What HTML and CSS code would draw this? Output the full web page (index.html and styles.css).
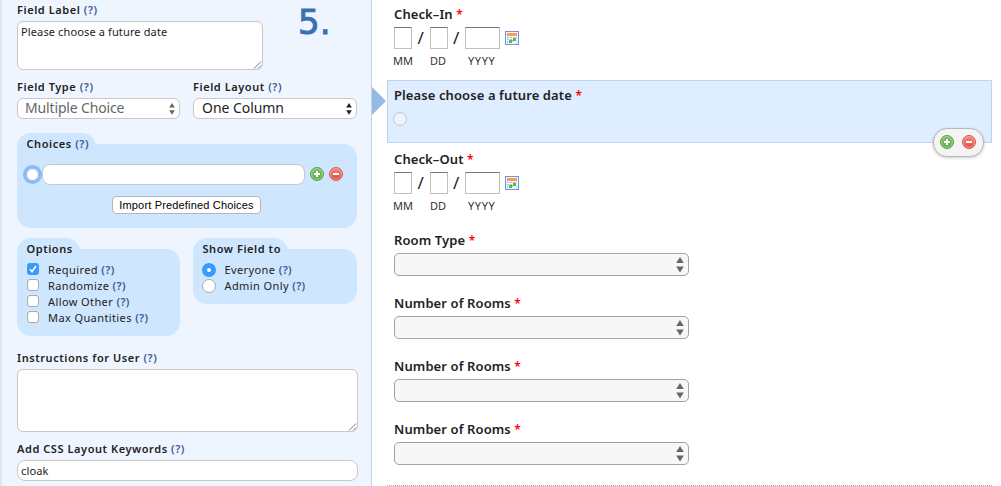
FILE: index.html
```html
<!DOCTYPE html>
<html lang="en">
<head>
<meta charset="utf-8">
<title>Form Builder</title>
<link rel="stylesheet" href="styles.css">
</head>
<body>
<svg class="defs" aria-hidden="true">
  <defs>
    <linearGradient id="green" x2="0" y2="1"><stop stop-color="#7cc468"/><stop offset="1" stop-color="#5bab4a"/></linearGradient>
    <linearGradient id="red" x2="0" y2="1"><stop stop-color="#f28a7b"/><stop offset="1" stop-color="#e2493c"/></linearGradient>
  </defs>
  <symbol id="add" viewBox="0 0 14 14">
    <circle cx="7" cy="7" r="6.5" fill="url(#green)" stroke="#5aa04f"/>
    <circle cx="7" cy="7" r="5.4" fill="none" stroke="#b4dda8" stroke-width=".7"/>
    <path d="M7 4v6M4 7h6" stroke="#fff" stroke-width="2"/>
  </symbol>
  <symbol id="remove" viewBox="0 0 14 14">
    <circle cx="7" cy="7" r="6.5" fill="url(#red)" stroke="#d65c50"/>
    <circle cx="7" cy="7" r="5.4" fill="none" stroke="#f8b5aa" stroke-width=".7"/>
    <path d="M4 7h6" stroke="#fff" stroke-width="2"/>
  </symbol>
  <symbol id="calendar" viewBox="0 0 14 14">
    <rect x=".5" y=".5" width="13" height="13" fill="#f4f8fd" stroke="#6c98d4"/>
    <rect x="2" y="2" width="10" height="3" fill="#fb9a57"/>
    <path d="M2 6h2v1H2zM5 6h2v1H5zM8 6h2v1H8zM11 6h1v1h-1zM2 8h2v1H2zM5 8h2v1H5zM2 10h1v2H2z" fill="#a3bfe4"/>
    <path d="M8 7h3v3H8zM4 9h3v3H4z" fill="#5fb355"/>
    <path d="M7 9h1v2H7z" fill="#a5d39c"/>
    <path d="M12.500 9.500v3h-3z" fill="#cddcf0"/>
  </symbol>
  <symbol id="updown" viewBox="0 0 8 16">
    <path d="M4 0l3.800 6H.2zM4 15.500L.2 9.500h7.600z" fill="currentColor"/>
  </symbol>
  <symbol id="grip" viewBox="0 0 9 9">
    <path d="M1 8.500L8 1.500M5 8.500L8 5.500" stroke="#555" fill="none" stroke-width=".8"/>
  </symbol>
</svg>
<div class="page">
  <aside class="panel">
    <div class="row top">
      <div class="field-label">
        <div class="label">Field Label <b class="help">(?)</b></div>
        <div class="box area-small">Please choose a future date<svg class="grip"><use href="#grip"/></svg></div>
      </div>
      <div class="step">5.</div>
    </div>
    <div class="row types">
      <div class="col-left">
        <div class="label">Field Type <b class="help">(?)</b></div>
        <div class="box select muted"><span>Multiple Choice</span><svg class="arrows"><use href="#updown"/></svg></div>
      </div>
      <div class="col-right">
        <div class="label">Field Layout <b class="help">(?)</b></div>
        <div class="box select layout"><span>One Column</span><svg class="arrows"><use href="#updown"/></svg></div>
      </div>
    </div>
    <section class="group choices">
      <div class="tab">Choices <b class="help">(?)</b></div>
      <div class="group-body">
        <div class="choice">
          <span class="focus-radio"></span>
          <div class="box choice-input"></div>
          <svg class="icon"><use href="#add"/></svg>
          <svg class="icon"><use href="#remove"/></svg>
        </div>
        <div class="button">Import Predefined Choices</div>
      </div>
    </section>
    <div class="row groups">
      <section class="group col-left">
        <div class="tab">Options</div>
        <div class="group-body options">
          <div class="option"><svg class="check on" viewBox="0 0 12 12"><path d="M3 6.300l2 2.400L9 3" fill="none" stroke="#fff" stroke-width="1.500"/></svg><span>Required <b class="help">(?)</b></span></div>
          <div class="option"><i class="check"></i><span>Randomize <b class="help">(?)</b></span></div>
          <div class="option"><i class="check"></i><span>Allow Other <b class="help">(?)</b></span></div>
          <div class="option"><i class="check"></i><span>Max Quantities <b class="help">(?)</b></span></div>
        </div>
      </section>
      <section class="group col-right">
        <div class="tab">Show Field to</div>
        <div class="group-body show">
          <div class="option"><i class="radio on"></i><span>Everyone <b class="help">(?)</b></span></div>
          <div class="option"><i class="radio"></i><span>Admin Only <b class="help">(?)</b></span></div>
        </div>
      </section>
    </div>
    <div class="instructions">
      <div class="label">Instructions for User <b class="help">(?)</b></div>
      <div class="box area-large"><svg class="grip"><use href="#grip"/></svg></div>
    </div>
    <div class="keywords">
      <div class="label">Add CSS Layout Keywords <b class="help">(?)</b></div>
      <div class="box text-input">cloak</div>
    </div>
  </aside>
  <main class="preview">
    <svg class="pointer" viewBox="0 0 14 28"><path d="M0 0l14 14L0 28z" fill="#95bae3"/></svg>
    <div class="item date">
      <div class="title">Check–In <b class="req">*</b></div>
      <div class="date-row"><i class="cell"></i><span class="slash">/</span><i class="cell"></i><span class="slash">/</span><i class="cell year"></i><svg class="icon cal"><use href="#calendar"/></svg></div>
      <div class="captions"><span>MM</span><span>DD</span><span>YYYY</span></div>
    </div>
    <div class="item selected">
      <div class="title">Please choose a future date <b class="req">*</b></div>
      <i class="radio disabled"></i>
      <div class="actions"><svg class="icon"><use href="#add"/></svg><svg class="icon"><use href="#remove"/></svg></div>
    </div>
    <div class="item date">
      <div class="title">Check–Out <b class="req">*</b></div>
      <div class="date-row"><i class="cell"></i><span class="slash">/</span><i class="cell"></i><span class="slash">/</span><i class="cell year"></i><svg class="icon cal"><use href="#calendar"/></svg></div>
      <div class="captions"><span>MM</span><span>DD</span><span>YYYY</span></div>
    </div>
    <div class="item drop"><div class="title">Room Type <b class="req">*</b></div><div class="dropdown"><svg class="arrows"><use href="#updown"/></svg></div></div>
    <div class="item drop"><div class="title">Number of Rooms <b class="req">*</b></div><div class="dropdown"><svg class="arrows"><use href="#updown"/></svg></div></div>
    <div class="item drop"><div class="title">Number of Rooms <b class="req">*</b></div><div class="dropdown"><svg class="arrows"><use href="#updown"/></svg></div></div>
    <div class="item drop"><div class="title">Number of Rooms <b class="req">*</b></div><div class="dropdown"><svg class="arrows"><use href="#updown"/></svg></div></div>
    <div class="divider"></div>
  </main>
</div>
</body>
</html>
```
FILE: styles.css
```css
* { box-sizing: border-box; }
body {
  margin: 0;
  background: #fff;
  color: #222;
  font-family: "Noto Sans", "Open Sans", sans-serif;
  font-size: 11px;
  overflow: hidden;
}
svg { display: block; flex: none; }
.defs { position: absolute; width: 0; height: 0; }
.page { display: flex; height: 486px; }
.panel {
  width: 372px;
  flex: none;
  padding: 2px 0 0 15px;
  background: #eef5ff;
  border-left: 2px solid #e3e6ea;
  border-right: 1px solid #bdd3ef;
}
.row { display: flex; }
.label {
  height: 16px;
  line-height: 16px;
  margin-bottom: 3px;
  font-weight: 600;
  letter-spacing: .56px;
  white-space: nowrap;
}
.help { color: #3b5998; font-weight: 600; }
.box {
  background: #fff;
  border: 1px solid #c8c8c8;
  border-radius: 6px;
}
.top { height: 77px; }
.field-label { width: 246px; }
.area-small {
  position: relative;
  height: 49px;
  padding: 2px 3px;
  line-height: 15px;
  letter-spacing: .13px;
}
.grip { position: absolute; right: 0; bottom: 0; width: 9px; height: 9px; }
.step {
  margin-left: 35px;
  height: 40px;
  line-height: 40px;
  font-family: "DejaVu Sans", sans-serif;
  font-size: 34px;
  color: #3a70b2;
  -webkit-text-stroke: 1px #3a70b2;
}
.types { height: 54px; }
.col-left { width: 163px; margin-right: 13px; }
.col-right { width: 164px; }
.select {
  display: flex;
  align-items: center;
  justify-content: space-between;
  height: 21px;
  padding: 0 4px 0 7px;
  font-size: 14px;
  line-height: 17px;
  letter-spacing: -.15px;
}
.select span { height: 19px; }
.layout { padding-left: 8px; letter-spacing: -.05px; }
.select .arrows { width: 6px; height: 12px; }
.muted { color: #666; }
.tab {
  width: max-content;
  height: 22px;
  margin-bottom: -11px;
  padding: 0 7px 0 9.5px;
  line-height: 22px;
  font-weight: 600;
  letter-spacing: .56px;
  background: #cfe6ff;
  border-radius: 14px 14px 0 0;
}
.group-body { background: #cfe6ff; border-radius: 14px; }
.choices { width: 340px; height: 105px; }
.choices .group-body { height: 84px; padding: 20px 0 0 6px; border-top-left-radius: 0; }
.groups .group-body { border-top-left-radius: 0; }
.choice { display: flex; align-items: center; height: 21px; }
.focus-radio {
  width: 19px;
  height: 19px;
  background: #fff;
  border: 3px solid #86bafb;
  box-shadow: inset 0 0 0 1px #8fb2de;
  border-radius: 50%;
}
.choice-input { width: 263px; height: 21px; margin-right: 5px; border-radius: 8px; }
.icon { width: 14px; height: 14px; }
.choice .icon { margin-top: -1px; }
.choice .icon + .icon { margin-left: 5px; }
.button {
  width: 149px;
  height: 18px;
  margin: 11px 0 0 89px;
  border: 1px solid #b5b5b5;
  border-radius: 4px;
  background: #fff;
  color: #000;
  text-align: center;
  font: 11px/16px "Liberation Sans", Arial, sans-serif;
  letter-spacing: .17px;
}
.groups { height: 112px; align-items: flex-start; }
.options { height: 87px; padding: 13px 0 0 10px; }
.show { height: 55px; padding: 13px 0 0 9px; }
.option { display: flex; height: 16px; line-height: 16px; letter-spacing: .4px; white-space: nowrap; }
.check {
  width: 12px;
  height: 12px;
  margin: 1px 9px 0 0;
  border: 1px solid #aaa;
  border-radius: 3px;
  background: #fff;
}
.check.on { border: 0; background: #3b99fc; }
.radio {
  width: 14px;
  height: 14px;
  flex: none;
  margin: 1px 9px 0 0;
  border: 1px solid #aaa;
  border-radius: 50%;
  background: #fff;
}
.show .radio { margin-right: 8.5px; }
.radio.on { border: 5px solid #3b99fc; }
.instructions { height: 91px; width: 341px; }
.area-large { position: relative; height: 63px; }
.keywords { width: 341px; }
.text-input { height: 21px; padding-left: 3px; line-height: 20px; letter-spacing: .13px; border-radius: 8px; }
.preview { position: relative; flex: 1; padding-top: 6px; }
.pointer { position: absolute; left: 0; top: 87px; width: 14px; height: 28px; }
.title {
  height: 17px;
  line-height: 17px;
  font-size: 13px;
  font-weight: 600;
  letter-spacing: .1px;
  white-space: nowrap;
}
.req { color: #f00; font-size: 12px; font-weight: 600; line-height: 1; }
.item { margin-left: 22px; }
.date { height: 74px; }
.date-row { display: flex; align-items: center; height: 22px; margin-top: 4px; }
.cell { width: 18px; height: 22px; border: 1px solid #c0c0c0; border-top-color: #777; background: #fff; }
.year { width: 35px; }
.slash { width: 17.5px; text-align: center; font-size: 17px; line-height: 22px; }
.cal { margin-left: 5px; }
.captions { display: flex; height: 16px; margin-top: 4px; line-height: 16px; color: #333; }
.captions span:nth-child(1) { width: 37px; margin-left: -1px; }
.captions span:nth-child(2) { width: 38px; }
.captions span:nth-child(3) { letter-spacing: .6px; }
.selected {
  position: relative;
  width: 605px;
  height: 63px;
  margin-left: 15px;
  padding: 6px;
  border: 1px solid #bdd3ef;
  background: #deedff;
}
.selected + .date { height: 89px; padding-top: 8px; }
.disabled { display: block; margin: 8px 0 0 -1px; border-color: #b9c7d7; background: #edf5ff; }
.actions {
  position: absolute;
  right: 7px;
  bottom: -15px;
  display: flex;
  align-items: center;
  justify-content: space-between;
  width: 51px;
  height: 29px;
  padding: 0 7px 1px 6px;
  border: 1px solid #b8b8b8;
  border-radius: 14px;
  background: #f4f4f4;
  box-shadow: 0 1px 3px rgba(0, 0, 0, .2);
}
.drop { height: 63px; }
.dropdown {
  display: flex;
  align-items: center;
  justify-content: flex-end;
  width: 295px;
  height: 23px;
  margin-top: 4px;
  padding-right: 4px;
  border: 1px solid #a3a3a3;
  border-radius: 5px;
  background: #f7f7f7;
  color: #666;
}
.dropdown .arrows { width: 8px; height: 16px; }
.divider { margin: 1px 9px 0 15px; border-top: 1px dotted #aaa; }
```
